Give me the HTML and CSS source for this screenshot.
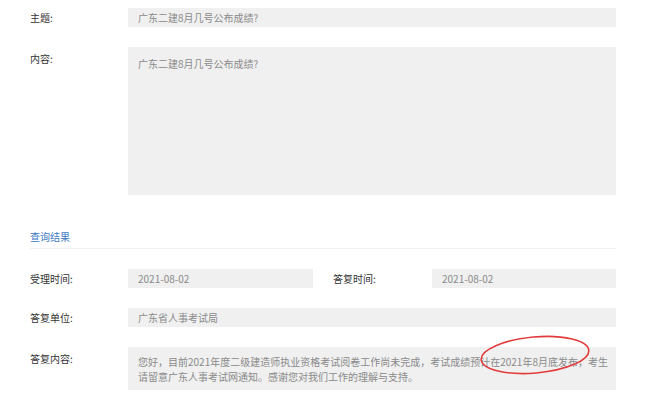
FILE: index.html
```html
<!DOCTYPE html>
<html lang="zh">
<head>
<meta charset="utf-8">
<link rel="stylesheet" href="styles.css">
</head>
<body>
<div class="page">
  <div class="row">
    <div class="label">主题:</div>
    <div class="field">广东二建8月几号公布成绩?</div>
  </div>
  <div class="row">
    <div class="label label-top">内容:</div>
    <div class="field area">广东二建8月几号公布成绩?</div>
  </div>

  <div class="section-title">查询结果</div>

  <div class="row row-pair">
    <div class="label">受理时间:</div>
    <div class="field">2021-08-02</div>
    <div class="label label-second">答复时间:</div>
    <div class="field">2021-08-02</div>
  </div>
  <div class="row">
    <div class="label">答复单位:</div>
    <div class="field">广东省人事考试局</div>
  </div>
  <div class="row reply-row">
    <div class="label label-top">答复内容:</div>
    <div class="field multi">您好，目前2021年度二级建造师执业资格考试阅卷工作尚未完成，考试成绩预计在2021年8月底发布，考生请留意广东人事考试网通知。感谢您对我们工作的理解与支持。</div>
    <svg class="circle-mark" width="130" height="56" viewBox="0 0 130 56">
      <ellipse cx="65" cy="28" rx="54" ry="18" transform="rotate(-5 65 28)" fill="none" stroke="#e23b3b" stroke-width="1.6"/>
    </svg>
  </div>
</div>
</body>
</html>
```
FILE: styles.css
```css
* { box-sizing: border-box; }
html, body {
  margin: 0;
  background: #ffffff;
}
body {
  font-family: "Noto Sans CJK SC", "Noto Sans", sans-serif;
  font-size: 10px;
  color: #333333;
}
.page {
  width: 645px;
  padding: 8px 29px 0 30px;
}
.row {
  display: grid;
  grid-template-columns: 98px 1fr;
  margin-bottom: 20px;
}
.row-pair {
  grid-template-columns: 98px 185px 119px 1fr;
}
.label {
  line-height: 19px;
  color: #333333;
  white-space: nowrap;
}
.label-top {
  padding-top: 2px;
}
.label-second {
  padding-left: 20px;
}
.field {
  background: #f0f0f0;
  color: #8a8a8a;
  line-height: 19px;
  height: 19px;
  padding: 0 10px;
  white-space: nowrap;
  overflow: hidden;
}
.area {
  height: 148px;
  padding-top: 9px;
  line-height: 15px;
}
.multi {
  height: 43px;
  white-space: normal;
  line-height: 15px;
  padding: 7px 3px 6px 10px;
}
.section-title {
  margin-top: 32px;
  color: #3a78c2;
  line-height: 20px;
  padding-bottom: 1px;
  border-bottom: 1px solid #f2f2f2;
  margin-bottom: 20px;
}
.reply-row {
  position: relative;
}
.circle-mark {
  position: absolute;
  left: 440px;
  top: -20px;
}
```
